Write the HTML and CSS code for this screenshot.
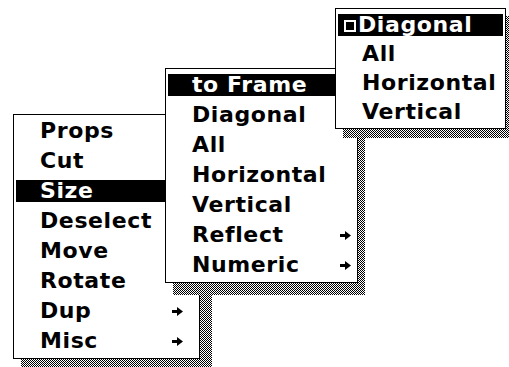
FILE: index.html
```html
<!DOCTYPE html>
<html lang="en">
<head>
  <meta charset="UTF-8">
  <title>Cascading Menus</title>
  <link rel="stylesheet" href="styles.css">
</head>
<body>
  <div class="desk">

    <!-- main popup -->
    <div class="popup popup-main">
      <div class="shade"></div>
      <ul class="menu">
        <li>Props</li>
        <li>Cut</li>
        <li class="sel">Size</li>
        <li>Deselect</li>
        <li>Move</li>
        <li>Rotate</li>
        <li>Dup <svg class="arrow" viewBox="0 0 11 9"><path d="M0 3h5V0l6 4.5L5 9V6H0z"/></svg></li>
        <li>Misc <svg class="arrow" viewBox="0 0 11 9"><path d="M0 3h5V0l6 4.5L5 9V6H0z"/></svg></li>
      </ul>
    </div>

    <!-- Size submenu -->
    <div class="popup popup-size">
      <div class="shade"></div>
      <ul class="menu">
        <li class="sel">to Frame</li>
        <li>Diagonal</li>
        <li>All</li>
        <li>Horizontal</li>
        <li>Vertical</li>
        <li>Reflect <svg class="arrow" viewBox="0 0 11 9"><path d="M0 3h5V0l6 4.5L5 9V6H0z"/></svg></li>
        <li>Numeric <svg class="arrow" viewBox="0 0 11 9"><path d="M0 3h5V0l6 4.5L5 9V6H0z"/></svg></li>
      </ul>
    </div>

    <!-- to Frame submenu -->
    <div class="popup popup-frame">
      <div class="shade"></div>
      <ul class="menu">
        <li class="sel checked"><span class="check"></span>Diagonal</li>
        <li>All</li>
        <li>Horizontal</li>
        <li>Vertical</li>
      </ul>
    </div>

  </div>
</body>
</html>
```

FILE: styles.css
```css
body {
  margin: 0;
  background: #fff;
  font-family: "DejaVu Sans", "Liberation Sans", sans-serif;
  font-weight: bold;
  color: #000;
}
.desk {
  position: relative;
  width: 509px;
  height: 367px;
  overflow: hidden;
}
.popup {
  position: absolute;
}
.popup-main {
  left: 13px;
  top: 114px;
  width: 187px;
}
.popup-size {
  left: 165px;
  top: 68px;
  width: 193px;
}
.popup-frame {
  left: 335px;
  top: 8px;
  width: 171px;
}
.shade {
  position: absolute;
  left: 8px;
  top: 8px;
  right: -12px;
  bottom: -9px;
  background: repeating-conic-gradient(#000 0 25%, #fff 0 50%) 0 0 / 2px 2px;
}
.popup-size .shade {
  right: -7px;
  bottom: -12px;
}
.popup-frame .shade {
  right: -4px;
  bottom: -9px;
}
.menu {
  position: relative;
  list-style: none;
  margin: 0;
  padding: 1px 2px 2px;
  background: #fff;
  border: 1px solid #000;
}
.menu li {
  display: flex;
  align-items: center;
  justify-content: space-between;
  position: relative;
  height: 22px;
  line-height: 22px;
  border-top: 4px solid transparent;
  border-bottom: 4px solid transparent;
  background-clip: padding-box;
  padding: 0 14px 0 24px;
  font-size: 22px;
  letter-spacing: 0.6px;
  white-space: nowrap;
}
.popup-size .menu li {
  padding-right: 4px;
}
.popup-frame .menu li {
  border-bottom-width: 3px;
  justify-content: flex-start;
}
.menu li.sel {
  background-color: #000;
  color: #fff;
}
.menu li.checked {
  padding-left: 20px;
}
.arrow {
  width: 11px;
  height: 9px;
  fill: currentColor;
}
.check {
  position: absolute;
  left: 6px;
  top: 6px;
  width: 8px;
  height: 8px;
  border: 2px solid #fff;
}
```
